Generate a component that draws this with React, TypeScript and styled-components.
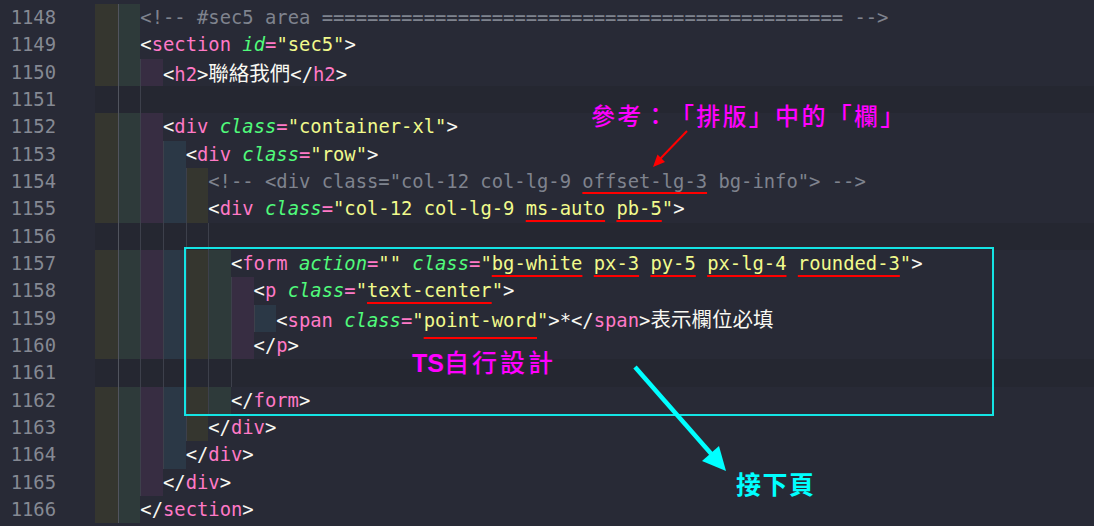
import React from "react";
import styled, { createGlobalStyle, css } from "styled-components";

const Global = createGlobalStyle`
  html, body { margin: 0; padding: 0; background: #282a36; }
  body { width: 1094px; height: 526px; overflow: hidden; }
`;

type Kind = "p" | "t" | "a" | "e" | "s" | "c" | "x" | "j";
type Token = [Kind, string, number?];
type Line = { n: number; indent: number; blank?: boolean; toks: Token[] };

const COLORS: Record<Kind, string> = {
  p: "#f8f8f2",
  t: "#ff79c6",
  a: "#50fa7b",
  e: "#ff79c6",
  s: "#f1fa8c",
  c: "#7f838e",
  x: "#f8f8f2",
  j: "#f8f8f2",
};

const RAINBOW = ["#35362f", "#2e3a3a", "#372d42", "#2b3846"];

const Editor = styled.div`
  position: relative;
  width: 1094px;
  height: 526px;
  box-sizing: border-box;
  padding-top: 4px;
  background: #282a36;
  font-family: "DejaVu Sans Mono", "Liberation Mono", monospace;
  font-size: 18.83px;
  display: flex;
  flex-direction: column;
  overflow: hidden;
`;

const Row = styled.div`
  display: flex;
  height: 27.333px;
  flex: none;
`;

const LineNo = styled.div`
  width: 56px;
  padding-right: 39px;
  flex: none;
  text-align: right;
  color: #858993;
  line-height: 27.333px;
`;

const CodeArea = styled.div<{ $blank?: boolean }>`
  flex: 1;
  display: flex;
  background: ${(p) => (p.$blank ? "#252731" : "transparent")};
`;

const Indent = styled.span<{ $level: number; $blank?: boolean }>`
  width: 22.667px;
  flex: none;
  background: ${(p) => (p.$blank ? "transparent" : RAINBOW[p.$level % 4])};
  box-shadow: ${(p) =>
    p.$level === 0
      ? "none"
      : `inset 1px 0 0 ${p.$level === 1 ? "#51545e" : "#3d404b"}`};
`;

const Code = styled.span`
  white-space: pre;
  line-height: 27.333px;
`;

const Tok = styled.span<{ $k: Kind; $u?: number }>`
  color: ${(p) => COLORS[p.$k]};
  font-style: ${(p) => (p.$k === "a" ? "italic" : "normal")};
  ${(p) =>
    p.$k === "j" &&
    css`
      font-family: "Noto Sans CJK TC", sans-serif;
      font-size: 20.5px;
    `}
  ${(p) =>
    p.$u !== undefined &&
    css`
      text-decoration: underline;
      text-decoration-color: #ff0000;
      text-decoration-thickness: 2px;
      text-underline-offset: ${p.$u}px;
      text-decoration-skip-ink: none;
    `}
`;

const HighlightBox = styled.div`
  position: absolute;
  left: 184px;
  top: 247px;
  width: 810px;
  height: 169px;
  box-sizing: border-box;
  border: 2px solid #14e4e4;
  pointer-events: none;
`;

const Note = styled.div<{ $x: number; $y: number; $color: string; $size: number; $spacing: number; $bold?: boolean }>`
  position: absolute;
  left: ${(p) => p.$x}px;
  top: ${(p) => p.$y}px;
  color: ${(p) => p.$color};
  font-family: "Noto Sans CJK TC", sans-serif;
  font-size: ${(p) => p.$size}px;
  font-weight: ${(p) => (p.$bold ? 700 : 500)};
  letter-spacing: ${(p) => p.$spacing}px;
  line-height: 1;
  white-space: nowrap;
  text-spacing-trim: space-all;
  font-feature-settings: "palt" 0, "halt" 0;
`;

const Latin = styled.span`
  font-family: "Liberation Sans", sans-serif;
  font-weight: 700;
  letter-spacing: 0;
`;

const ArrowLayer = styled.svg`
  position: absolute;
  left: 0;
  top: 0;
  width: 1094px;
  height: 526px;
  pointer-events: none;
`;

const S = (t: string, u?: number): Token => ["s", t, u];

const LINES: Line[] = [
  { n: 1148, indent: 2, toks: [["c", "<!-- #sec5 area " + "=".repeat(46) + " -->"]] },
  { n: 1149, indent: 2, toks: [["p", "<"], ["t", "section"], ["p", " "], ["a", "id"], ["e", "="], S('"sec5"'), ["p", ">"]] },
  { n: 1150, indent: 3, toks: [["p", "<"], ["t", "h2"], ["p", ">"], ["j", "聯絡我們"], ["p", "</"], ["t", "h2"], ["p", ">"]] },
  { n: 1151, indent: 3, blank: true, toks: [] },
  { n: 1152, indent: 3, toks: [["p", "<"], ["t", "div"], ["p", " "], ["a", "class"], ["e", "="], S('"container-xl"'), ["p", ">"]] },
  { n: 1153, indent: 4, toks: [["p", "<"], ["t", "div"], ["p", " "], ["a", "class"], ["e", "="], S('"row"'), ["p", ">"]] },
  { n: 1154, indent: 5, toks: [["c", '<!-- <div class="col-12 col-lg-9 '], ["c", "offset-lg-3", 4], ["c", ' bg-info"> -->']] },
  {
    n: 1155,
    indent: 5,
    toks: [["p", "<"], ["t", "div"], ["p", " "], ["a", "class"], ["e", "="], S('"col-12 col-lg-9 '), S("ms-auto", 5), S(" "), S("pb-5", 5), S('"'), ["p", ">"]],
  },
  { n: 1156, indent: 6, blank: true, toks: [] },
  {
    n: 1157,
    indent: 6,
    toks: [
      ["p", "<"], ["t", "form"], ["p", " "], ["a", "action"], ["e", "="], S('""'), ["p", " "], ["a", "class"], ["e", "="],
      S('"'), S("bg-white", 5), S(" "), S("px-3", 5), S(" "), S("py-5", 5), S(" "), S("px-lg-4", 5), S(" "), S("rounded-3", 5), S('"'), ["p", ">"],
    ],
  },
  { n: 1158, indent: 7, toks: [["p", "<"], ["t", "p"], ["p", " "], ["a", "class"], ["e", "="], S('"'), S("text-center", 5), S('"'), ["p", ">"]] },
  {
    n: 1159,
    indent: 8,
    toks: [["p", "<"], ["t", "span"], ["p", " "], ["a", "class"], ["e", "="], S('"'), S("point-word", 10), S('"'), ["p", ">*</"], ["t", "span"], ["p", ">"], ["j", "表示欄位必填"]],
  },
  { n: 1160, indent: 7, toks: [["p", "</"], ["t", "p"], ["p", ">"]] },
  { n: 1161, indent: 7, blank: true, toks: [] },
  { n: 1162, indent: 6, toks: [["p", "</"], ["t", "form"], ["p", ">"]] },
  { n: 1163, indent: 5, toks: [["p", "</"], ["t", "div"], ["p", ">"]] },
  { n: 1164, indent: 4, toks: [["p", "</"], ["t", "div"], ["p", ">"]] },
  { n: 1165, indent: 3, toks: [["p", "</"], ["t", "div"], ["p", ">"]] },
  { n: 1166, indent: 2, toks: [["p", "</"], ["t", "section"], ["p", ">"]] },
];

export default function App() {
  return (
    <>
      <Global />
      <Editor>
        {LINES.map((line) => (
          <Row key={line.n}>
            <LineNo>{line.n}</LineNo>
            <CodeArea $blank={line.blank}>
              {Array.from({ length: line.indent }).map((_, i) => (
                <Indent key={i} $level={i} $blank={line.blank} />
              ))}
              <Code>
                {line.toks.map(([k, t, u], i) => (
                  <Tok key={i} $k={k} $u={u}>
                    {t}
                  </Tok>
                ))}
              </Code>
            </CodeArea>
          </Row>
        ))}

        <HighlightBox />

        <Note $x={591} $y={103} $color="#ff00ff" $size={24} $spacing={2.3}>
          參考：「排版」中的「欄」
        </Note>
        <Note $x={412} $y={349} $color="#ff00ff" $size={25} $spacing={3}>
          <Latin>TS</Latin>自行設計
        </Note>
        <Note $x={736} $y={471} $color="#00ffff" $size={25} $spacing={1.5} $bold>
          接下頁
        </Note>

        <ArrowLayer viewBox="0 0 1094 526">
          <line x1={687} y1={131} x2={660} y2={159} stroke="#ff0000" strokeWidth={2} />
          <polygon points="653,167 665,162 657.5,154.5" fill="#ff0000" />
          <line x1={635} y1={367} x2={714} y2={457} stroke="#00ffff" strokeWidth={4.5} />
          <polygon points="726,471 702,461 719,446" fill="#00ffff" />
        </ArrowLayer>
      </Editor>
    </>
  );
}
